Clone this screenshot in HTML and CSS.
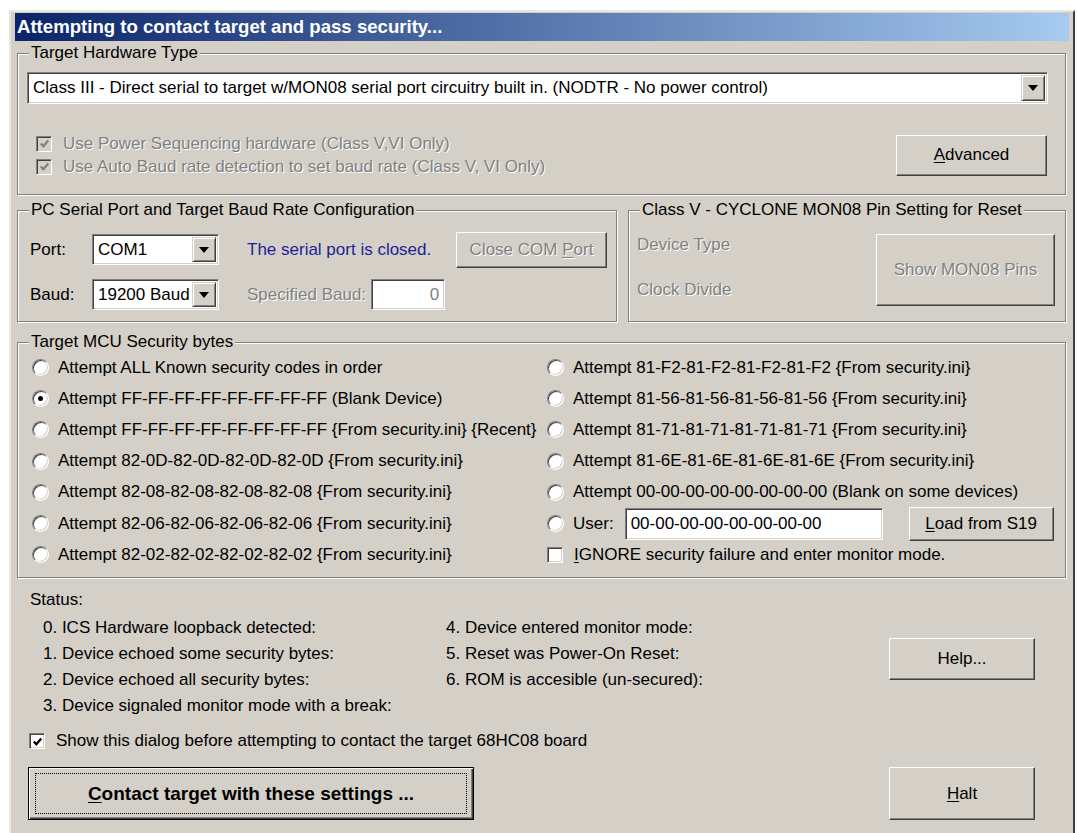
FILE: index.html
```html
<!DOCTYPE html>
<html lang="en">
<head>
<meta charset="utf-8">
<title>Contact target</title>
<link rel="stylesheet" href="styles.css">
</head>
<body>
<div class="window">
  <div class="titlebar">Attempting to contact target and pass security...</div>
  <div class="client">

    <fieldset class="group g-hw">
      <legend>Target Hardware Type</legend>
      <div class="inner hw-inner">
        <div class="combo combo-hw">
          <span class="combo-text">Class III - Direct serial to target w/MON08 serial port circuitry built in. (NODTR - No power control)</span>
          <span class="drop"><i class="tri"></i></span>
        </div>
        <div class="hw-row">
          <div class="checks">
            <div class="check disabled">
              <span class="box box-off"><svg viewBox="0 0 14 14"><path d="M3 7 L5.8 10 L11 3.8" /></svg></span>
              <span class="dis">Use Power Sequencing hardware (Class V,VI Only)</span>
            </div>
            <div class="check disabled">
              <span class="box box-off"><svg viewBox="0 0 14 14"><path d="M3 7 L5.8 10 L11 3.8" /></svg></span>
              <span class="dis">Use Auto Baud rate detection to set baud rate (Class V, VI Only)</span>
            </div>
          </div>
          <div class="btn btn-adv"><span><u>A</u>dvanced</span></div>
        </div>
      </div>
    </fieldset>

    <div class="mid-row">
      <fieldset class="group g-serial">
        <legend>PC Serial Port and Target Baud Rate Configuration</legend>
        <div class="inner serial-inner">
          <div class="srow">
            <span class="slabel">Port:</span>
            <div class="combo combo-small">
              <span class="combo-text">COM1</span>
              <span class="drop"><i class="tri"></i></span>
            </div>
            <span class="port-state">The serial port is closed.</span>
            <div class="btn btn-close"><span class="dis">Close COM <u>P</u>ort</span></div>
          </div>
          <div class="srow">
            <span class="slabel">Baud:</span>
            <div class="combo combo-small">
              <span class="combo-text">19200 Baud</span>
              <span class="drop"><i class="tri"></i></span>
            </div>
            <span class="dis spec">Specified Baud:</span>
            <div class="field field-baud"><span class="dis">0</span></div>
          </div>
        </div>
      </fieldset>

      <fieldset class="group g-cyclone">
        <legend>Class V - CYCLONE MON08 Pin Setting for Reset</legend>
        <div class="inner cyc-inner">
          <div class="cyc-labels">
            <span class="dis">Device Type</span>
            <span class="dis">Clock Divide</span>
          </div>
          <div class="btn btn-pins"><span class="dis">Show MON08 Pins</span></div>
        </div>
      </fieldset>
    </div>

    <fieldset class="group g-sec">
      <legend>Target MCU Security bytes</legend>
      <div class="inner sec-grid">
        <div class="opt"><span class="radio"></span>Attempt ALL Known security codes in order</div>
        <div class="opt"><span class="radio"></span>Attempt 81-F2-81-F2-81-F2-81-F2 {From security.ini}</div>
        <div class="opt"><span class="radio on"></span>Attempt FF-FF-FF-FF-FF-FF-FF-FF (Blank Device)</div>
        <div class="opt"><span class="radio"></span>Attempt 81-56-81-56-81-56-81-56 {From security.ini}</div>
        <div class="opt"><span class="radio"></span>Attempt FF-FF-FF-FF-FF-FF-FF-FF {From security.ini} {Recent}</div>
        <div class="opt"><span class="radio"></span>Attempt 81-71-81-71-81-71-81-71 {From security.ini}</div>
        <div class="opt"><span class="radio"></span>Attempt 82-0D-82-0D-82-0D-82-0D {From security.ini}</div>
        <div class="opt"><span class="radio"></span>Attempt 81-6E-81-6E-81-6E-81-6E {From security.ini}</div>
        <div class="opt"><span class="radio"></span>Attempt 82-08-82-08-82-08-82-08 {From security.ini}</div>
        <div class="opt"><span class="radio"></span>Attempt 00-00-00-00-00-00-00-00 (Blank on some devices)</div>
        <div class="opt"><span class="radio"></span>Attempt 82-06-82-06-82-06-82-06 {From security.ini}</div>
        <div class="opt opt-user">
          <span class="radio"></span>User:
          <div class="field field-user"><span>00-00-00-00-00-00-00-00</span></div>
          <div class="btn btn-load"><span><u>L</u>oad from S19</span></div>
        </div>
        <div class="opt"><span class="radio"></span>Attempt 82-02-82-02-82-02-82-02 {From security.ini}</div>
        <div class="opt"><span class="box box-white"></span><span><u>I</u>GNORE security failure and enter monitor mode.</span></div>
      </div>
    </fieldset>

    <div class="status-title">Status:</div>
    <div class="status-body">
      <div class="status-cols">
        <span>0. ICS Hardware loopback detected:</span>
        <span>4. Device entered monitor mode:</span>
        <span>1. Device echoed some security bytes:</span>
        <span>5. Reset was Power-On Reset:</span>
        <span>2. Device echoed all security bytes:</span>
        <span>6. ROM is accesible (un-secured):</span>
        <span>3. Device signaled monitor mode with a break:</span>
      </div>
      <div class="btn btn-help"><span>Help...</span></div>
    </div>

    <div class="check show-row">
      <span class="box box-white"><svg viewBox="0 0 14 14"><path d="M3 7 L5.8 10 L11 3.8" /></svg></span>
      <span>Show this dialog before attempting to contact the target 68HC08 board</span>
    </div>

    <div class="action-row">
      <div class="btn btn-default"><div class="focus"><span><u>C</u>ontact target with these settings ...</span></div></div>
      <div class="btn btn-halt"><span><u>H</u>alt</span></div>
    </div>

  </div>
</div>
</body>
</html>
```

FILE: styles.css
```css
html, body {
  margin: 0;
  padding: 0;
}

body {
  width: 1077px;
  height: 833px;
  overflow: hidden;
  background: #ffffff;
  font-family: "Liberation Sans", Arial, sans-serif;
  font-size: 17px;
  color: #000;
}

u {
  text-decoration: underline;
  text-underline-offset: 2px;
}

/* ---------- window frame ---------- */
.window {
  margin: 10px 0 0 9px;
  width: 1066px;
  height: 860px;
  box-sizing: border-box;
  background: #d4d0c8;
  border: 2px solid;
  border-color: #e9e7e2 #404040 #404040 #e9e7e2;
  padding: 1px 4px 0 4px;
}

.titlebar {
  height: 28px;
  line-height: 28px;
  padding-left: 2px;
  background: linear-gradient(to right, #0a246a, #a6caf0);
  color: #fff;
  font-weight: bold;
  font-size: 18.6px;
  white-space: nowrap;
}

.client {
  padding: 2px 3px 0 2px;
}

/* ---------- group boxes ---------- */
.group {
  margin: 0;
  padding: 0;
  min-width: 0;
  border: 1px solid #808080;
  box-shadow: inset 1px 1px 0 #fff, 1px 1px 0 #fff;
}

.group > legend {
  margin-left: 11px;
  padding: 0 2px;
  line-height: 20px;
  background: #d4d0c8;
}

.dis {
  color: #808080;
  text-shadow: 1px 1px 0 #fff;
}

/* ---------- shared controls ---------- */
.combo {
  display: flex;
  align-items: stretch;
  box-sizing: border-box;
  background: #fff;
  border: 1px solid;
  border-color: #808080 #fff #fff #808080;
  box-shadow: inset 1px 1px 0 #404040, inset -1px -1px 0 #d4d0c8;
  padding: 2px;
}

.combo-text {
  flex: 1;
  display: flex;
  align-items: center;
  padding-left: 3px;
  white-space: nowrap;
  overflow: hidden;
}

.drop {
  width: 24px;
  box-sizing: border-box;
  display: flex;
  align-items: center;
  justify-content: center;
  background: #d4d0c8;
  border: 1px solid;
  border-color: #d4d0c8 #404040 #404040 #d4d0c8;
  box-shadow: inset 1px 1px 0 #fff, inset -1px -1px 0 #808080;
}

.tri {
  width: 0;
  height: 0;
  border-left: 5px solid transparent;
  border-right: 5px solid transparent;
  border-top: 6px solid #000;
}

.field {
  display: flex;
  align-items: center;
  box-sizing: border-box;
  background: #fff;
  border: 1px solid;
  border-color: #808080 #fff #fff #808080;
  box-shadow: inset 1px 1px 0 #404040, inset -1px -1px 0 #d4d0c8;
  padding: 0 5px;
  white-space: nowrap;
}

.btn {
  display: flex;
  align-items: center;
  justify-content: center;
  box-sizing: border-box;
  background: #d4d0c8;
  border: 1px solid;
  border-color: #fff #404040 #404040 #fff;
  box-shadow: inset -1px -1px 0 #808080;
  white-space: nowrap;
}

.radio {
  position: relative;
  flex: none;
  width: 17px;
  height: 17px;
  box-sizing: border-box;
  border-radius: 50%;
  background: #fff;
  border: 1px solid;
  border-color: #808080 #fff #fff #808080;
  box-shadow: inset 1px 1px 0 #404040, inset -1px -1px 0 #d4d0c8;
  margin-right: 9px;
}

.radio.on::after {
  content: "";
  position: absolute;
  left: 5px;
  top: 5px;
  width: 5px;
  height: 5px;
  border-radius: 50%;
  background: #000;
}

.box {
  flex: none;
  width: 16px;
  height: 16px;
  box-sizing: border-box;
  border: 1px solid;
  border-color: #808080 #fff #fff #808080;
  box-shadow: inset 1px 1px 0 #404040, inset -1px -1px 0 #d4d0c8;
  display: flex;
  align-items: center;
  justify-content: center;
}

.box svg {
  width: 13px;
  height: 13px;
}

.box svg path {
  fill: none;
  stroke: #000;
  stroke-width: 2.4;
}

.box-white {
  background: #fff;
}

.box-off {
  background: #d4d0c8;
}

.box-off svg path {
  stroke: #808080;
}

.check {
  display: flex;
  align-items: center;
  white-space: nowrap;
}

.check .box {
  margin-right: 11px;
}

/* ---------- target hardware ---------- */
.hw-inner {
  padding: 9px 17px 16px 9px;
}

.combo-hw {
  height: 32px;
}

.hw-row {
  margin-top: 28px;
  display: flex;
  align-items: center;
  justify-content: space-between;
}

.checks {
  padding-left: 9px;
  display: flex;
  flex-direction: column;
}

.checks .check {
  height: 23px;
}

.btn-adv {
  width: 151px;
  height: 41px;
  margin-right: 1px;
}

/* ---------- serial port / cyclone ---------- */
.mid-row {
  margin-top: 5px;
  display: flex;
  gap: 11px;
}

.g-serial {
  width: 600px;
  box-sizing: border-box;
}

.g-cyclone {
  flex: 1;
}

.serial-inner {
  padding: 14px 9px 11px 12px;
  display: flex;
  flex-direction: column;
  gap: 14px;
}

.srow {
  height: 31px;
  display: flex;
  align-items: center;
}

.slabel {
  width: 62px;
}

.combo-small {
  width: 127px;
  height: 31px;
}

.port-state {
  margin-left: 28px;
  color: #1e1e96;
}

.spec {
  margin-left: 28px;
}

.btn-close {
  margin-left: auto;
  width: 151px;
  height: 36px;
  flex: none;
}

.field-baud {
  margin-left: 5px;
  width: 74px;
  height: 31px;
  justify-content: flex-end;
}

.cyc-inner {
  padding: 14px 10px 15px 8px;
  display: flex;
  justify-content: space-between;
}

.cyc-labels {
  padding-top: 1px;
  display: flex;
  flex-direction: column;
  gap: 25px;
  line-height: 20px;
}

.btn-pins {
  width: 179px;
  height: 72px;
}

/* ---------- security bytes ---------- */
.g-sec {
  margin-top: 10px;
}

.sec-grid {
  padding: 0 0 7px 14px;
  display: grid;
  grid-template-columns: 515px 1fr;
  grid-auto-rows: 31.2px;
}

.opt {
  display: flex;
  align-items: center;
  white-space: nowrap;
}

.opt .box {
  margin-right: 11px;
}

.field-user {
  margin-left: 11px;
  width: 258px;
  height: 32px;
}

.btn-load {
  margin-left: 26px;
  width: 145px;
  height: 34px;
}

/* ---------- status ---------- */
.status-title {
  margin-top: 12px;
  padding-left: 13px;
  line-height: 20px;
}

.status-body {
  display: flex;
  align-items: flex-start;
}

.status-cols {
  margin-top: 5px;
  padding-left: 26px;
  display: grid;
  grid-template-columns: 403px auto;
  grid-auto-rows: 26px;
  align-items: center;
  white-space: nowrap;
}

.btn-help {
  margin: 28px 31px 0 auto;
  width: 146px;
  height: 42px;
}

.show-row {
  margin-top: 12px;
  padding-left: 12px;
  height: 20px;
}

.action-row {
  margin-top: 16px;
  display: flex;
  justify-content: space-between;
  padding: 0 31px 0 11px;
}

.btn-default {
  width: 446px;
  height: 53px;
  border: 1px solid #000;
  box-shadow: inset 1px 1px 0 #fff, inset -1px -1px 0 #404040, inset -2px -2px 0 #808080;
  padding: 5px 6px;
  font-weight: bold;
  font-size: 19px;
}

.focus {
  flex: 1;
  align-self: stretch;
  display: flex;
  align-items: center;
  justify-content: center;
  border: 1px dotted #000;
}

.btn-halt {
  width: 146px;
  height: 53px;
}
```
